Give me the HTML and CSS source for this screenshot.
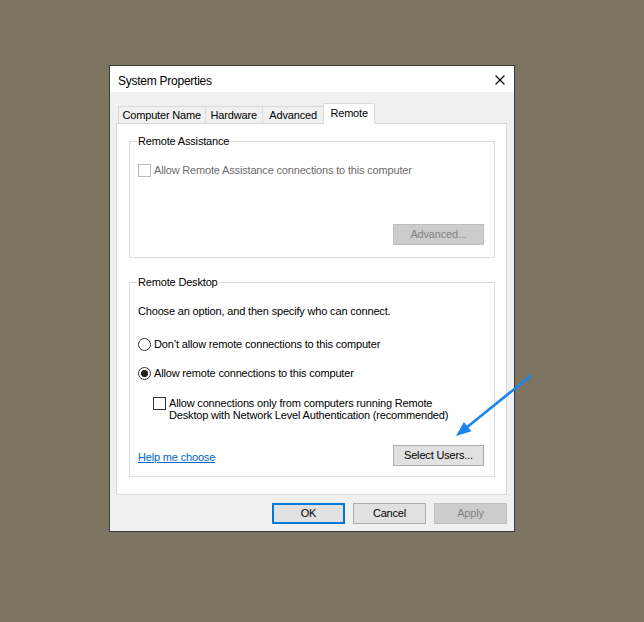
FILE: index.html
```html
<!DOCTYPE html>
<html>
<head>
<meta charset="utf-8">
<link rel="stylesheet" href="styles.css">
</head>
<body>
<div class="dialog">
  <div class="titlebar">
    <span class="title">System Properties</span>
    <svg class="close" width="10" height="10" viewBox="0 0 10 10"><path d="M0.5 0.5 L9.5 9.5 M9.5 0.5 L0.5 9.5" stroke="#000" stroke-width="1.1" fill="none"/></svg>
  </div>
  <div class="content">
    <div class="tabs">
      <div class="tab tab-name">Computer Name</div>
      <div class="tab">Hardware</div>
      <div class="tab tab-adv">Advanced</div>
      <div class="tab active">Remote</div>
    </div>
    <div class="panel">
      <fieldset class="group group-assist">
        <legend>Remote Assistance</legend>
        <label class="check disabled"><span class="box"></span><span>Allow Remote Assistance connections to this computer</span></label>
        <div class="actions"><button class="btn btn-wide" disabled>Advanced...</button></div>
      </fieldset>
      <fieldset class="group group-desktop">
        <legend>Remote Desktop</legend>
        <p class="intro">Choose an option, and then specify who can connect.</p>
        <label class="radio radio-first"><span class="dot"></span><span>Don’t allow remote connections to this computer</span></label>
        <label class="radio radio-second checked"><span class="dot"></span><span>Allow remote connections to this computer</span></label>
        <label class="check nested"><span class="box"></span><span class="multi">Allow connections only from computers running Remote<br>Desktop with Network Level Authentication (recommended)</span></label>
        <div class="link-row"><a class="help" href="#">Help me choose</a><button class="btn btn-wide">Select Users...</button></div>
      </fieldset>
    </div>
    <div class="footer">
      <button class="btn default">OK</button>
      <button class="btn">Cancel</button>
      <button class="btn" disabled>Apply</button>
    </div>
  </div>
</div>
<svg class="arrow" width="86" height="72" viewBox="0 0 86 72">
  <line x1="80.5" y1="6" x2="16" y2="58" stroke="#1a86f0" stroke-width="2.6" stroke-linecap="round"/>
  <polygon points="6,66 21.5,61.3 13.9,51.9" fill="#1a86f0"/>
</svg>
</body>
</html>
```
FILE: styles.css
```css
* { box-sizing: border-box; }

body {
  margin: 0;
  height: 622px;
  padding: 65px 0 0 109px;
  background: #7d7461;
  font-family: "Liberation Sans", Arial, sans-serif;
  font-size: 11px;
  letter-spacing: -0.17px;
  color: #000;
  position: relative;
}

.dialog {
  width: 406px;
  height: 467px;
  border: 1px solid #3a3a3a;
  background: #f0f0f0;
  display: flex;
  flex-direction: column;
}

.titlebar {
  height: 26px;
  flex: none;
  background: #fff;
  display: flex;
  align-items: center;
  justify-content: space-between;
  padding: 2px 9px 0 8px;
}

.title {
  font-size: 12px;
  letter-spacing: -0.25px;
  line-height: 16px;
  margin-top: 2px;
}

.close { display: block; }

.content {
  flex: 1;
  padding: 11px 7px 7px 6px;
}

.tabs {
  display: flex;
  align-items: flex-end;
  height: 21px;
  margin: 0 0 -1px 2px;
  position: relative;
  z-index: 1;
}

.tab {
  height: 17px;
  margin-bottom: 1px;
  margin-left: -1px;
  padding: 0 5px;
  border: 1px solid #d9d9d9;
  border-bottom: 0;
  line-height: 16px;
  white-space: nowrap;
}

.tab:first-child { margin-left: 0; }
.tab-name { padding: 0 3.5px; }
.tab-adv { padding: 0 6.5px; }

.tab.active {
  height: 21px;
  margin-bottom: 0;
  padding: 0 6px;
  background: #fff;
  line-height: 18px;
}

.panel {
  height: 372px;
  background: #fff;
  border: 1px solid #d9d9d9;
  padding: 11px 11px 0 12px;
}

.group {
  margin: 0;
  min-width: 0;
  border: 1px solid #dcdcdc;
  padding: 16px 10px 12px 8px;
}

.group legend {
  padding: 0 1px;
  margin-left: -1px;
  line-height: 13px;
}

.group-desktop {
  margin-top: 18px;
  padding-bottom: 10px;
}

.check, .radio {
  display: flex;
  align-items: center;
  gap: 3px;
  height: 13px;
  line-height: 13px;
  white-space: nowrap;
}

.box {
  flex: none;
  width: 13px;
  height: 13px;
  border: 1px solid #333;
  background: #fff;
}

.check.disabled { color: #6d6d6d; }
.check.disabled .box { border-color: #bcbcbc; }

.dot {
  flex: none;
  width: 13px;
  height: 13px;
  border: 1px solid #333;
  border-radius: 50%;
  background: #fff;
}

.radio.checked .dot {
  background: radial-gradient(circle, #222 0 3.3px, #fff 3.9px);
}

.actions {
  display: flex;
  justify-content: flex-end;
  margin-top: 47px;
}

.intro {
  margin: 0;
  line-height: 13px;
}

.radio-first { margin-top: 20px; }
.radio-second { margin-top: 16px; }

.check.nested {
  margin: 17px 0 0 15px;
  height: auto;
  align-items: flex-start;
}

.multi { line-height: 12px; }

.link-row {
  display: flex;
  justify-content: space-between;
  align-items: flex-end;
  margin-top: 24px;
}

.help {
  color: #0066cc;
  text-decoration: underline;
  line-height: 13px;
  margin-bottom: 2px;
}

.btn {
  width: 73px;
  height: 21px;
  padding: 0;
  border: 1px solid #adadad;
  background: #e1e1e1;
  color: #000;
  font-family: "Liberation Sans", Arial, sans-serif;
  font-size: 11px;
  letter-spacing: -0.17px;
  line-height: 17px;
}

.btn-wide { width: 91px; }

.btn.default { border: 2px solid #0078d7; }

.btn:disabled {
  background: #cccccc;
  border-color: #bfbfbf;
  color: #838383;
}

.footer {
  display: flex;
  justify-content: flex-end;
  gap: 8px;
  margin-top: 8px;
}

.arrow {
  position: absolute;
  left: 450px;
  top: 370px;
}
```
